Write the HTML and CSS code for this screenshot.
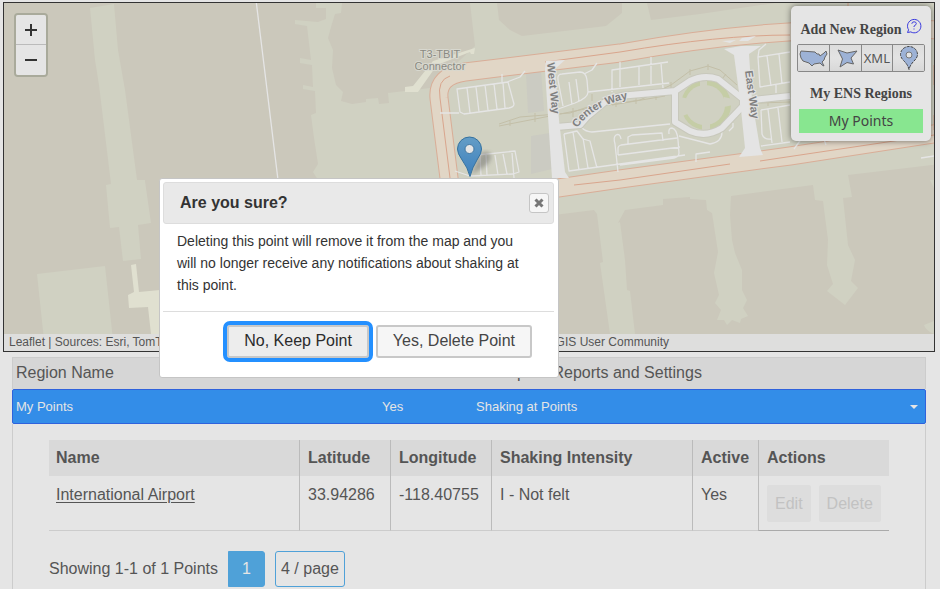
FILE: index.html
```html
<!DOCTYPE html>
<html lang="en">
<head>
<meta charset="utf-8">
<title>ENS Regions</title>
<link rel="stylesheet" href="styles.css">
</head>
<body>
<main class="page">
  <section class="map" aria-label="Map">
    <svg class="map-art" viewBox="4 3 930 348" preserveAspectRatio="xMinYMin slice" aria-hidden="true">
      <rect class="building" x="4" y="3" width="1600" height="600"/>
      <g class="ground">
        <path d="M90 8L114 4L118 50L125 90L137 180H145V181L151 223L138 225L141 259L123 261L119 227L110 228L106 185L111 184L99 85L95 60Z"/>
        <path d="M37 274L105 266L113 340H44Z"/>
        <path d="M316 3H940V164L848 175L852 197L843 198L848 245L855 260L851 281L858 288L845 305L827 291L833 284L827 265L828 240L823 201L815 200L813 185L731 196L730 215L732 240L735 253L742 270V290L747 300L743 308L748 316L741 319L740 323L732 320L727 325L724 320L717 320L721 310L715 303L719 295L714 273L718 252L712 213L707 210L706 200L690 199V197L663 199V205L625 210L618 223L620 222L625 260L627 290L630 291L635 334H610L600 263L603 262L597 214L594 210L400 234L330 234L318 180L313 172L318 164L314 138L311 115L316 113L315 91L303 89V85L313 87L312 65L300 63V58L311 60L307 26L295 24V20L318 22L326 19V8H316Z"/>
        <path d="M924 325L934 321V334Q926 331 924 325ZM930 180h4v8Z"/>
      </g>
      <g class="building">
        <path d="M342 3L341 13L335 14L331 27L328 38L333 50L332 68L336 85L343 92L341 101L352 104L366 102V99L378 98L379 104L389 103L388 93L430 88L475 46L470 3Z"/>
        <path d="M497 3L499 20L510 30L522 36L606 26L622 13V3ZM647 3L651 20L700 14L775 3Z"/>
        <path class="lot" d="M526 73L541 70L544 111L528 113ZM531 136L550 133L552 169L531 174Z"/>
      </g>
      <g class="jetway">
        <path d="M131 265L136 264L139 292L160 290V334H151L148 307L129 308L128 295L134 292Z"/>
        <path d="M475 48L474 54L471 54L470 52L437 65L418 92H405V87L413 86L433 61Z"/>
      </g>
      <g class="garden"><circle cx="706" cy="105" r="25"/><circle cx="705" cy="105" r="20" class="court"/><path class="court" d="M700 78h7v9h-7zM702 122h8v9h-8zM680 97l10 2v14l-10 4zM724 97l9 2v6l-9 2z"/></g>
      <g class="rail">
        <path d="M499 126L535 119L590 108L640 100L671 85L690 71L708 66L720 70L737 85M499 124L520 117L570 113L620 96M612 105L665 96M758 103L790 102"/>
        <path d="M510 121v5M535 113v9M573 108v9M592 94v7M616 101v6M636 98v6M656 94v6M671 82v6M690 69v6M708 64v6M726 74l-4 5M768 101v5"/>
      </g>
      <path class="road-edge" d="M940 30Q785 23 620 53L465 72Q437 76 439 98L449 178L452 200L558 188L620 179L790 156L940 133"/>
      <path class="road-fill" d="M940 30Q785 23 620 53L465 72Q437 76 439 98L449 178L452 200L558 188L620 179L790 156L940 133"/>
      <path class="road-line" d="M790 35Q720 35 620 52L545 62M450 76Q437 80 440 98L450 178M574 185L620 180L730 164M760 161L934 135M934 65v20M934 115v15M848 3v4"/>
      <g class="lane">
        <path d="M256 0L264 65L278 180"/>
        <path d="M457 89L508 82L514 104Q514 107 509 108L464 114L460 112ZM467 88L470 113M476 87L479 112M485 85L488 110M494 84L497 109M503 83L505 108M502 82V74M507 82L520 77L525 71M440 113L459 113"/>
        <path d="M478 155L515 151L519 172L513 174L470 176L455 171M480 154L481 176M486 155L487 176M495 155L498 175M503 154L507 174M512 153L514 178"/>
        <path d="M558 109L575 103Q588 98 588 92L587 80Q586 72 580 72L562 74Q557 74 558 80L563 106M569 82L572 105M576 79L579 101M584 74L592 70L597 63M588 92L669 83M612 92V70L668 62M620 62V87M639 66V85M651 57V84M661 63L663 88"/>
        <path d="M564 134L577 131L583 139L590 141L597 168M564 134L569 171L685 155M573 132L579 170M583 138L588 168M581 127Q586 132 592 132L670 124M621 139Q620 133 616 135Q613 137 615 144L618 172M618 155L680 147M618 155V148Q618 146 621 145L677 138M628 145V137L632 135L662 133L663 141M669 134Q668 128 672 128Q677 129 678 140L679 153Q679 157 674 158L620 165M679 136L710 144Q722 142 722 132M733 123v4l-4 4M696 162V154L710 152"/>
        <path d="M758 57L790 52M766 44L759 50L758 57L760 87L790 82M767 56L771 86M779 54L782 84M776 84V93M761 110L790 105M761 110L762 134Q764 140 771 139M768 109L772 143M778 108L782 142M761 146L790 142M794 149L802 138M826 145L824 139M921 158L934 156"/>
      </g>
      <g class="street-casing">
        <path d="M556 127L580 125L587 117L605 102Q615 96 630 95L676 91M675 91L690 81Q704 74 718 79L728 87L743 99V106L722 128Q706 138 690 131L675 122ZM753 100L790 96"/>
      </g>
      <g class="street">
        <path d="M556 127L580 125L587 117L605 102Q615 96 630 95L676 91M675 91L690 81Q704 74 718 79L728 87L743 99V106L722 128Q706 138 690 131L675 122ZM753 100L790 96"/>
      </g>
      <path class="street-end" d="M546 61L565 60L555 69L559 120L565 172L569 178H552L545 70ZM722 41L736 40L730 43ZM742 38L756 36L748 41L739 41ZM724 49L741 46L761 46L749 54L752 100L760 148L763 155L739 157L745 148L740 100L734 55Z"/>
      <g class="map-label">
        <text x="440" y="58" text-anchor="middle">T3-TBIT</text><text x="440" y="70" text-anchor="middle">Connector</text>
        <text class="road-name" transform="translate(547 63) rotate(84)">West Way</text>
        <text class="road-name" transform="translate(745 71) rotate(82)">East Way</text>
        <path id="center-way" d="M577 128Q594 104 632 98" fill="none"/>
        <text class="road-name"><textPath href="#center-way">Center Way</textPath></text>
      </g>
    </svg>

    <div class="zoom-control">
      <button class="zoom-button" type="button" aria-label="Zoom in"><svg viewBox="0 0 14 14"><path d="M1 7h12M7 1v12"/></svg></button>
      <button class="zoom-button" type="button" aria-label="Zoom out"><svg viewBox="0 0 14 14"><path d="M1 7h12"/></svg></button>
    </div>

    <svg class="marker" viewBox="0 0 45 42" aria-hidden="true">
      <defs>
        <linearGradient id="pin" x1="0" y1="0" x2="0" y2="1"><stop offset="0" stop-color="#649dc6"/><stop offset="1" stop-color="#3d80bd"/></linearGradient>
        <filter id="soft"><feGaussianBlur stdDeviation="2"/></filter>
      </defs>
      <path d="M14 39L23 18Q30 13 34 19Q35 25 27 31Z" fill="#555" opacity=".4" filter="url(#soft)"/>
      <path d="M13 40.500Q11 32 4.500 23Q.5 17.500.5 13A12 12 0 0 1 24.500 13Q24.500 17.500 20.500 23Q15 32 13 40.500Z" fill="url(#pin)" stroke="#34719f"/>
      <circle cx="12.500" cy="13" r="4.500" fill="#e6e6e6" stroke="#4177a0"/>
    </svg>

    <aside class="region-panel">
      <div class="panel-head">
        <h2 class="panel-title">Add New Region</h2>
        <a class="help" href="#help" aria-label="Help"><svg viewBox="0 0 16 16"><path d="M1.500 14.500L2.600 11.800A6.700 6.700 0 1 1 4.800 13.900Z"/><path d="M5.800 5.800Q6 3.800 8.100 3.800T10.300 5.600Q10.300 6.700 9 7.300T8 9M8 10.500v1"/></svg></a>
      </div>
      <div class="region-tools">
        <button type="button" aria-label="Predefined region"><svg viewBox="0 0 29 20"><path d="M2 3L9 3.500L16 4L18 6L20 6L21 8L25 5L27 3L28 6L26 9L25 12L23 14L25 18L23 17L21 15L15 16L13 18L10 15L4 13L2 10L1 6Z"/></svg></button>
        <button type="button" aria-label="Polygon region"><svg viewBox="0 0 29 20"><path d="M7 2L16 5L26 3L20 10L22.500 16L16 14.500L9 19L11.500 11Z"/></svg></button>
        <button type="button">XML</button>
        <button type="button" aria-label="Point region"><svg class="point-icon" viewBox="0 0 20 26"><path d="M10 24.500Q9 20 5 16Q1.500 12.500 1.500 9.500A8.500 8 0 0 1 18.500 9.500Q18.500 12.500 15 16Q11 20 10 24.500Z"/><circle cx="10" cy="10" r="3"/></svg></button>
      </div>
      <h2 class="panel-title">My ENS Regions</h2>
      <button class="my-points" type="button">My Points</button>
    </aside>

    <div class="attribution">Leaflet | Sources: Esri, TomTom, Garmin, FAO, NOAA, USGS, © OpenStreetMap contributors, and the GIS User Community</div>
  </section>

  <section class="regions">
    <div class="region-row region-head"><span>Region Name</span><span>Active</span><span>Receipt of Reports and Settings</span></div>
    <button class="region-row region-item" type="button" aria-expanded="true"><span>My Points</span><span>Yes</span><span>Shaking at Points</span><i class="caret"></i></button>
    <div class="region-detail">
      <table class="points">
        <colgroup><col class="col-name"><col class="col-lat"><col class="col-lon"><col class="col-shake"><col class="col-active"><col class="col-actions"></colgroup>
        <thead><tr><th>Name</th><th>Latitude</th><th>Longitude</th><th>Shaking Intensity</th><th>Active</th><th>Actions</th></tr></thead>
        <tbody><tr><td><a href="#point">International Airport</a></td><td>33.94286</td><td>-118.40755</td><td>I - Not felt</td><td>Yes</td>
          <td class="actions"><div class="action-buttons"><button type="button" disabled>Edit</button><button type="button" disabled>Delete</button></div></td></tr></tbody>
      </table>
      <div class="pager"><span>Showing 1-1 of 1 Points</span><button class="page-current" type="button">1</button><button class="page-size" type="button">4 / page</button></div>
    </div>
  </section>
</main>

<div class="dialog" role="dialog" aria-labelledby="dialog-title">
  <header class="dialog-head">
    <h1 id="dialog-title">Are you sure?</h1>
    <button class="close" type="button" aria-label="Close"><svg viewBox="0 0 10 10"><path d="M1.500 1.500l7 7M8.500 1.500l-7 7"/></svg></button>
  </header>
  <p class="dialog-text">Deleting this point will remove it from the map and you will no longer receive any notifications about shaking at this point.</p>
  <footer class="dialog-foot">
    <button class="keep" type="button">No, Keep Point</button>
    <button type="button">Yes, Delete Point</button>
  </footer>
</div>
</body>
</html>
```
FILE: styles.css
```css
* { box-sizing: border-box; }
html, body { height: 100%; }
body {
  margin: 0;
  overflow: hidden;
  background: #e5e5e5;
  color: #555;
  font: 16px/22px "Liberation Sans", Arial, sans-serif;
}
button { font: inherit; color: inherit; margin: 0; padding: 0; }
h1, h2, p { margin: 0; }
.page { display: flex; flex-direction: column; min-height: 100%; padding-top: 2px; }

/* Map */
.map {
  position: relative;
  height: 350px;
  margin: 0 5px 0 3px;
  border: 1px solid #333;
  overflow: hidden;
  flex: none;
}
.map-art { display: block; width: 100%; height: 100%; }
.building { fill: #cbc8bb; }
.lot { fill: #cbcbc2; }
.ground { fill: #d0d1c2; }
.jetway { fill: #e0e0d0; }
.garden { fill: #c5cda6; }
.court { fill: #d0d1c2; }
.rail { fill: none; stroke: #c3bfa8; stroke-width: 1; }
.road-edge, .road-fill, .road-line, .lane, .street, .street-casing { fill: none; stroke-linejoin: round; }
.road-edge { stroke: #d9ad97; stroke-width: 19; }
.road-fill { stroke: #e1d6c6; stroke-width: 17; }
.road-line { stroke: #d9a58d; stroke-width: 1; }
.lane { stroke: #e5e5e5; stroke-width: 1.3; }
.street-casing { stroke: #c8c8bc; stroke-width: 8; }
.street { stroke: #e4e4e4; stroke-width: 6; }
.street-end { fill: #e4e4e4; }
.map-label { fill: #8a8a82; stroke: #d8d8cf; stroke-width: 2; paint-order: stroke; font: 11px "Liberation Sans", Arial, sans-serif; }
.map-label .road-name { fill: #808080; stroke: #e2e2e2; font-weight: bold; }
#center-way { stroke: none; }

.zoom-control {
  position: absolute;
  top: 10px;
  left: 10px;
  display: flex;
  flex-direction: column;
  border: 2px solid #a9aa9b;
  border-radius: 4px;
  overflow: hidden;
}
.zoom-button { display: grid; place-items: center; width: 30px; height: 30px; background: #e5e5e5; border: 0; }
.zoom-button:first-child { border-bottom: 1px solid #bbb; }
.zoom-button svg { width: 14px; height: 14px; fill: none; stroke: #333; stroke-width: 2; }
.marker { position: absolute; left: 453px; top: 133px; width: 45px; height: 42px; }

.region-panel {
  position: absolute;
  top: 3px;
  right: 3px;
  width: 140px;
  padding: 12px 6px 8px;
  border-radius: 5px;
  background: #e5e5e5;
  box-shadow: 0 0 6px rgba(0, 0, 0, .5);
  text-align: center;
}
.panel-head { display: flex; justify-content: center; gap: 4px; margin-bottom: 2px; }
.panel-title { font: bold 14px/24px "Liberation Serif", serif; color: #444; white-space: nowrap; }
.help svg { display: block; width: 16px; height: 16px; fill: none; stroke: #3a3adf; stroke-width: 1; }
.region-tools { display: flex; margin-bottom: 10px; border: 1px solid #888; border-radius: 2px; overflow: hidden; }
.region-tools button {
  display: grid;
  place-items: center;
  flex: 1;
  height: 26px;
  border: 0;
  background: linear-gradient(#ddd, #e3e3e3 50%, #d8d8d8);
  font: 13px/20px "Noto Sans", sans-serif;
  color: #555;
}
.region-tools button + button { border-left: 1px solid #888; }
.region-tools svg { width: 29px; height: 20px; fill: #9db2d6; stroke: #666; stroke-width: 1; }
.region-tools .point-icon { width: 20px; height: 26px; }
.point-icon path { stroke: #444; stroke-dasharray: 3 1; }
.point-icon circle { fill: #e5e5e5; stroke: #777; }
.my-points { display: block; width: 124px; height: 24px; margin: 3px auto 0; border: 0; background: #88e690; color: #444; font: 14px/24px "Noto Sans", sans-serif; }

.attribution {
  position: absolute;
  left: 0;
  right: 0;
  bottom: 0;
  height: 17px;
  padding: 0 5px;
  background: #dededd;
  font-size: 12px;
  line-height: 16px;
  white-space: nowrap;
  overflow: hidden;
}

/* Region list */
.regions { display: flex; flex-direction: column; flex: 1; margin: 5px 14px 0 12px; }
.region-row { display: grid; grid-template-columns: 366px 94px 1fr 12px; align-items: center; padding: 0 3px; text-align: left; }
.region-head { height: 32px; padding-bottom: 2px; border: 1px solid #ccc; border-bottom: 0; background: #d6d6d6; }
.region-item { height: 35px; border: 1px solid #2f62dc; border-radius: 2px; background: #338de8; color: #e5e5e5; font-size: 13px; }
.caret { width: 0; height: 0; border: 4px solid transparent; border-top-color: #e5e5e5; border-bottom: 0; }
.region-detail { flex: 1; padding: 16px 36px 0; border: solid #ccc; border-width: 0 1px; }
.points { width: 100%; border-collapse: separate; border-spacing: 0; table-layout: fixed; }
.col-name { width: 250px; }
.col-lat { width: 91px; }
.col-lon { width: 101px; }
.col-shake { width: 201px; }
.col-active { width: 66px; }
.points th, .points td { padding: 7px 0 7px 8px; text-align: left; vertical-align: top; border-left: 1px solid #bbb; }
.points th:first-child, .points td:first-child { padding-left: 7px; border-left: 0; }
.points th { height: 36px; background: #d9d9d9; white-space: nowrap; }
.points td { height: 55px; padding-top: 8px; border-bottom: 1px solid #ccc; }
.points a { color: inherit; text-underline-offset: 2px; }
.points .actions { padding: 9px 8px 8px; border-bottom-color: #aaa; }
.action-buttons { display: flex; gap: 8px; }
.action-buttons button { height: 37px; padding: 0 8px; border: 0; border-radius: 2px; background: #ddd; color: #c2c2c2; }
.pager { display: flex; align-items: center; gap: 10px; margin-top: 20px; }
.pager button { height: 36px; border: 1px solid #4fa1d8; border-radius: 3px; background: none; }
.pager .page-current { width: 37px; border-radius: 0 3px 3px 0; background: #4fa1d8; color: #e5e5e5; }
.pager .page-size { padding: 0 5px; }

/* Confirmation dialog */
.dialog {
  position: absolute;
  top: 178px;
  left: 159px;
  width: 400px;
  padding: 3px 4px 3px 3px;
  border: 1px solid #c5c5c5;
  border-radius: 3px;
  background: #fff;
  color: #333;
}
.dialog-head { display: flex; align-items: center; justify-content: space-between; height: 42px; padding: 0 4px 0 16px; border: 1px solid #ddd; border-radius: 3px; background: #e9e9e9; }
.dialog-head h1 { font-size: 16px; line-height: 22px; }
.close { display: grid; place-items: center; width: 20px; height: 20px; border: 1px solid #c5c5c5; border-radius: 3px; background: #f6f6f6; }
.close svg { width: 10px; height: 10px; stroke: #777; stroke-width: 3; }
.dialog-text { padding: 6px 24px 15px 14px; font-size: 14px; line-height: 22px; }
.dialog-foot { display: flex; justify-content: flex-end; gap: 7px; padding: 13px 22px 16px; border-top: 1px solid #ddd; }
.dialog-foot button { height: 33px; padding: 0 15px 2px; border: 2px solid #c8c8c8; border-radius: 3px; background: #f6f6f6; color: #454545; }
.dialog-foot .keep { background: #ededed; color: #2b2b2b; outline: 4px solid #2490ff; }
```
